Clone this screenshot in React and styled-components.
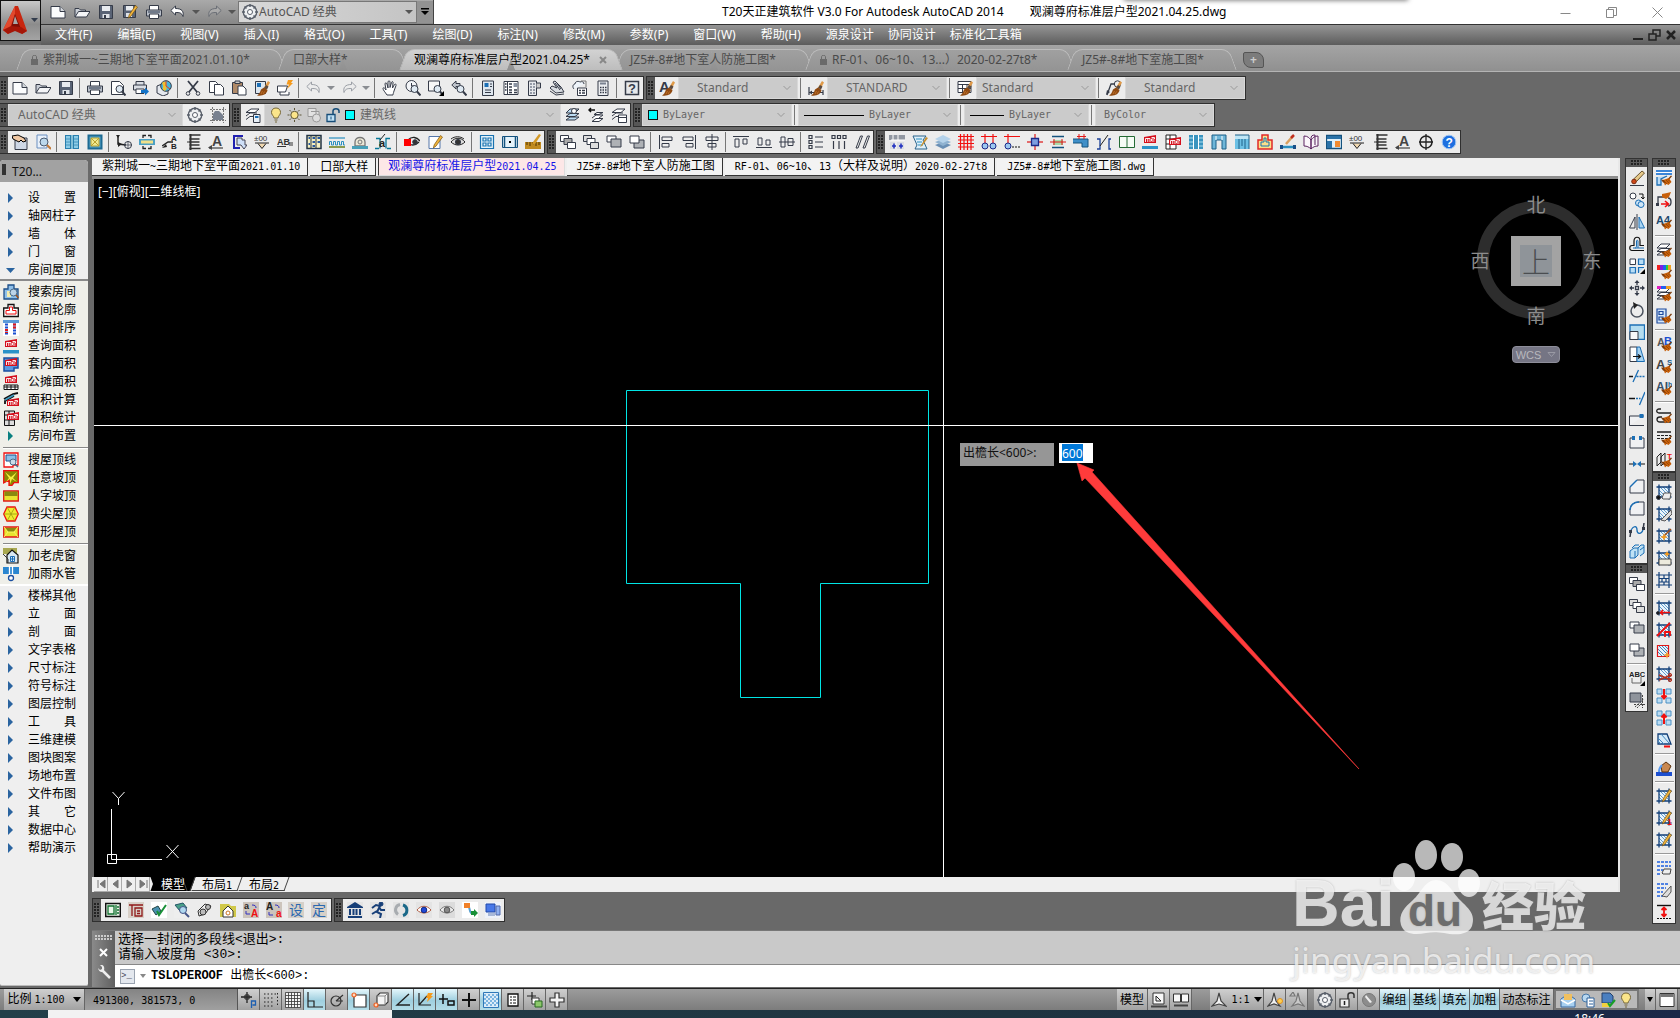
import React from "react";
import styled, { createGlobalStyle, css } from "styled-components";

const UI = '"Noto Sans", "Noto Sans CJK SC", sans-serif';
const INK = "#353b48";
const BLUE = "#1c6fb5";
const NAVY = "#123f78";

const Global = createGlobalStyle`
  *, *::before, *::after { box-sizing: border-box; }
  html, body { margin: 0; height: 100%; overflow: hidden; }
  body { font: 12px/16px ${UI}; background: #696969; color: #000; }
  button, input, select { font: inherit; color: inherit; margin: 0; padding: 0; border: 0; background: none; border-radius: 0; }
  button { display: inline-flex; align-items: center; justify-content: center; }
  a { color: inherit; text-decoration: none; }
`;

/* ---------- drawing shorthands ---------- */
const P = ({ d, f = "none", s = INK, w = 1 }) => <path d={d} fill={f} stroke={s} strokeWidth={w} />;
const F = ({ d, f = INK }) => <path d={d} fill={f} />;
const C = ({ x, y, r, f = "none", s = INK, w = 1 }) => <circle cx={x} cy={y} r={r} fill={f} stroke={s} strokeWidth={w} />;
const Brush = () => (
  <>
    <F d="M14 1l2 1.500-3.500 6.500-2.500-1.500z" f="#e09a48" />
    <F d="M12 5l2.500 1.500-1.500 3-3-1.500z" f="#5a4a40" />
    <F d="M7 9.500l3-2 3.500 2.500c-.5 4-5 6.500-10.500 5.500 2-1 3-3 4-6z" f="#8f4a12" />
    <P d="M8.500 11l-1.500 3M10.500 11.500l-1.500 2.500" s="#c87830" w={0.8} />
  </>
);
const Brush2 = () => (
  <>
    <F d="M15 5.500l1 .8-3.400 4-1.200-1z" f="#7c3b0a" />
    <F d="M7 10l6-2 2.500 4-3 3-2-1-1.500 1.500-1-2.500z" f="#c8600a" />
    <F d="M5 9.500l3 .5 1 3-2-.5z" f="#7c3b0a" />
    <P d="M8 11l3 3M10 10l3 3M12 9.500l2 2" s="#8a3d00" w={0.7} />
  </>
);
const Pencil = () => (
  <>
    <F d="M13.500 1.500l2 1.600-6.500 9-2.600 1.900.8-3.200z" f="#f0b43c" />
    <P d="M13.500 1.500l2 1.600-6.500 9-2.600 1.900.8-3.200z" s="#7a5510" w={0.7} />
  </>
);
const Lens = () => (
  <>
    <C x={9.500} y={9} r={3.500} f="#dfeaf3" />
    <P d="M12 11.500l3.500 4" w={2} />
  </>
);
const M2 = ({ x = 3, y = 2 }) => (
  <g transform={`translate(${x} ${y})`}>
    <F d="M0 2l12-2v8H0z" f="#d40f1c" />
    <P d="M1.500 7V3.500h4.500V7M3.750 3.500V7M7.500 2.500h3v1.500h-3v2h3" s="#fff" w={0.9} />
  </g>
);
const Hatch = ({ c = NAVY }) => (
  <>
    <F d="M3 3h10v10H3z" f="#e9f4fc" />
    <P d="M3 6l7 7M3 9l4 4M4 3l9 9M7 3l6 6M10 3l3 3" s="#3f86bf" w={0.8} />
    <P d="M3 .5v15M13 .5v15M.5 3h15M.5 13h15" s={c} w={1.3} />
  </>
);
const Glyph = ({ c, x = 0, y = 12, s = 12, f = "#222", b = 700 }) => (
  <text x={x} y={y} fontSize={s} fill={f} fontWeight={b} fontFamily='"Liberation Sans", sans-serif'>{c}</text>
);
const Stack = ({ c = "#fff" }) => (
  <>
    <P d="M1 13l4-3h9l-4 3zM1 9.500l4-3h9l-4 3z" f={c} />
    <P d="M1 6l4-4h9l-4 4z" f={c} />
  </>
);
const Overlap = ({ a = "#bbb", b = "#fff" }) => (
  <>
    <P d="M.5 1.500h8v6h-8z" f={b} />
    <P d="M4 4.500h8v6H4z" f={a} />
    <P d="M7.500 8.500h8v6h-8z" f={b} />
  </>
);

const icons = {
  new: <><P d="M1 2.500h9l5 5v6.500H1z" f="#fbfcfd" /><P d="M10 2.500v5h5" f="#d5d9de" /></>,
  open: <><P d="M1 13V4.500h4l1.500 1.500h5v2" f="#c9ced6" /><P d="M1 13l3.500-5.500H16L12.500 13z" f="#f4f5f7" /></>,
  save: <><P d="M1.500 1.500h13v13h-13z" f="#596375" /><F d="M4 2h8v5H4z" f="#e8ebef" /><F d="M4.500 10h7v4h-7z" f="#dfe3e8" /><F d="M6 11h2v3H6z" /></>,
  saveas: <><P d="M1.500 1.500h12v12h-12z" f="#596375" /><F d="M4 2h7v4.500H4z" f="#e8ebef" /><F d="M4 9h6v4H4z" f="#dfe3e8" /><Pencil /></>,
  print: <><P d="M3.500 6V1.500h9V6" f="#fff" /><P d="M.5 6h15v6H.5z" f="#b9bfc9" /><P d="M3.500 10h9v4.500h-9z" f="#fff" /><P d="M2 8h12" s="#596375" w={1.5} /></>,
  preview: <><P d="M1.500 1.500h8l4 4v9h-12z" f="#fff" /><Lens /></>,
  publish: <><P d="M3 5V1.500h8V5M.5 5h13v5H.5z" f="#d9dde3" /><P d="M3 9h8v4.500H3z" f="#fff" /><F d="M8 10h4V7.500l4 4-4 4V13H8z" f="#1473c8" /></>,
  web: <><P d="M1 6l5-2 6 3v7l-5 2-6-3z" f="#e4e8ee" /><C x={10} y={6} r={5.3} f="#46b4dc" /><F d="M7 2c3-1 4 1 3 3s2 3 0 5-4-1-3-3-2-3 0-5z" f="#f0c030" /><P d="M10 1v5l4 3" s="#e04020" /></>,
  cut: <><P d="M3 1l9 11M13 1L4 12" w={1.8} /><C x={3} y={13.500} r={1.8} /><C x={13} y={13.500} r={1.8} /></>,
  copy: <><P d="M1.500 1.500h6l2 2v9h-8z" f="#fff" /><P d="M6.500 4.500h6l3 3v7.500h-9z" f="#fff" /></>,
  paste: <><P d="M1.500 2.500h10v11h-10z" f="#b08a68" /><P d="M4 1h5v2.500H4z" f="#ccc" /><P d="M7 6h5l3 3v6H7z" f="#fff" /></>,
  match: <><P d="M1.500 1.500h10v12h-10z" f="#dce6ef" /><F d="M3 3h4v4H3z" f={BLUE} /><Brush /></>,
  block: <><P d="M.5 6h10l-2 6h-8zM3 12v3h9v-3" f="#fff" /><F d="M11 0l5 0-2 3h2l-6 6 2-4.500H9.500z" f="#f59a1c" /></>,
  undo: <P d="M5.500 2L.8 6.500l4.700 4.500V8.500c4 0 6 0 7.500 4 1-5-1-8-7.500-8z" f="#fff" />,
  undoOff: <P d="M5.500 2L.8 6.500l4.700 4.500V8.500c4 0 6 0 7.500 4 1-5-1-8-7.500-8z" s="#9b9fa6" />,
  redoOff: <P d="M10.500 2l4.700 4.500-4.700 4.500V8.500c-4 0-6 0-7.500 4-1-5 1-8 7.500-8z" s="#9b9fa6" />,
  redoDark: <P d="M10.500 2l4.700 4.500-4.700 4.500V8.500c-4 0-6 0-7.500 4-1-5 1-8 7.500-8z" s="#6b6f76" f="#aaa" />,
  caret: <F d="M0 6h8l-4 4z" f="#555" />,
  caretOff: <F d="M0 6h8l-4 4z" f="#8a8d92" />,
  pan: <P d="M5 15C3 12 1 10 1 8.500s2-.5 3 1.500L3 4c0-1.500 1.500-1.500 2 0l1 4V2c0-1.500 2-1.500 2 0v5.500L9.500 2.500c.5-1.500 2-1 1.500.5L10.500 8l2-3.500c1-1 2 0 1.500 1L12 11c-.5 2-1 3-1 4z" f="#fff" />,
  zoomrt: <><C x={6.500} y={6} r={5.500} f="#f3f5f8" /><P d="M6.500 3v3H10" /><Lens /></>,
  zoomwin: <><P d="M.5 1h11v10H.5z" f="#f7f7f7" /><Lens /><F d="M16 11v5h-5z" f="#000" /></>,
  zoomprev: <><P d="M5 1L.8 5 5 9V6.500h4v-3H5z" f="#c0c5cc" /><Lens /></>,
  props: <><P d="M2.500 1h11v14.500h-11z" f="#dfe7ef" /><F d="M4.500 3h4v4h-4z" f={BLUE} /><P d="M10 4h2M10 6.500h2M5 10h6M5 12.500h6" /></>,
  center: <><P d="M1 1.500h14v13H1z" f="#fff" /><P d="M4.500 1.500v13" /><path d="M6 4h3M6 7h3M6 10h3M2 4h1.500M2 7h1.500M2 10h1.500M6 12.500h3M11 12.500h3M11 10h3" stroke={INK} strokeWidth="1.500" /><F d="M10.500 3h4v4h-4z" f="#8a93a2" /></>,
  palette: <><P d="M2.500 1h8v14.500h-8z" f="#e7e9ec" /><P d="M4 4h2M7 4h2M4 7h2M7 7h2M4 10h2M7 10h2M4 13h2M7 13h2" w={1.5} s="#7b8190" /><P d="M10.500 3h4v5h-4" f="#ccc" /></>,
  sheet: <><P d="M1 8l6 5 8-1-3-5-6-6-2 1 4 6-5-2z" f="#d9dde2" /><P d="M1 11l6 4 8-1M6 3l5 7M8 3l4 6" /></>,
  markup: <><P d="M2 9C0 7 1 4 3 4c0-3 4-3 5-2 2-1 4 0 4 2" f="#eef4fa" /><P d="M9 1h5v6" s="#777" /><P d="M5.500 8h9v7.500h-9z" f="#fff" /><P d="M7 10.500h2M10 10.500h3M7 13h2M10 13h3" w={1.3} /></>,
  calc: <><P d="M3 1h10v14.500H3z" f="#eceef1" /><P d="M5 3.500h6" w={2} s="#7a8290" /><P d="M5 7.500h1.500M7.500 7.500H9M10 7.500h1.500M5 10h1.500M7.500 10H9M10 10h1.500M5 12.500h1.500M7.500 12.500H9M10 12.500h1.500" w={1.3} /></>,
  help: <><P d="M1.500 1.500h13v13h-13z" f="#e6e8eb" w={1.5} /><Glyph c="?" x={4} y={13} s={13} f={INK} /></>,
  textStyle: <><Glyph c="A" x={0} y={12} s={15} f={INK} /><Brush /></>,
  dimStyle: <><P d="M1 7v8M15 10v5M1 12.500h14" w={1.2} /><F d="M1 12.500l3-2v4z" /><Brush /></>,
  tableStyle: <><P d="M1 1.500h13v11H1zM1 4.500h13M1 8.500h13M5.500 4.500v8M10 4.500v8" f="#fff" /><Brush /></>,
  leaderStyle: <><P d="M1 15L5 4h4" w={1.3} /><F d="M0 15l1-5 3 2z" /><C x={11.500} y={4} r={3.200} f="#eee" /><Brush /></>,
  gear: <><C x={8} y={8} r={6.300} w={2.200} s="#5a606b" /><C x={8} y={8} r={5.500} f="#eef0f2" s="#eef0f2" /><P d="M8 0v3M8 13v3M0 8h3M13 8h3M2.500 2.500l2 2M11.500 11.500l2 2M13.500 2.500l-2 2M4.500 11.500l-2 2" w={1.500} s="#5a606b" /><C x={8} y={8} r={2.500} f="#fff" s="#5a606b" /></>,
  frozen: <><path d="M0 2.500h16M0 13.500h16M2.500 0v16M13.500 0v16" stroke="#777" strokeDasharray="2 1" /><F d="M3 13V7l2-3h4l4 4v5z" f="#77808f" /></>,
  layers: <><P d="M1 12.500l4-3h6M1 9l4-3h7M1 5.500L6 2h8l-4 3.500z" f="#fff" /><P d="M8.500 7.500h6.500v8H8.500z" f="#e8f0f8" /><F d="M10 9h3.500v2H10z" f={BLUE} /></>,
  layerUp: <><Stack c="#bcdcf2" /><C x={9} y={4} r={2.500} f="#fff" /></>,
  layerPrev: <><P d="M4 14.500l4-3h7l-4 3zM4 11l4-3h7l-4 3M6 7.500l3-2h6l-4 2z" f="#fff" /><P d="M1 3h6M3 1L1 3l2 2" w={1.500} s="#111" /></>,
  layerState: <><P d="M1 12.500l4-3h6M1 9l4-3h7M1 5.500L6 2h8l-4 3.500z" f="#fff" /><P d="M7.500 8h8v7.500h-8zM7.500 10.500h8" f="#fff" /></>,
  bulb: <><F d="M6 1c3 0 4.500 2 4.500 4.500S8 9 8 11H4c0-2-2.500-3-2.500-5.500S3 1 6 1z" f="#fbe58a" /><P d="M6 1c3 0 4.500 2 4.500 4.500S8 9 8 11H4c0-2-2.500-3-2.500-5.500S3 1 6 1zM4.500 13h3M5 15h2" s="#77683a" /></>,
  sun: <><C x={7.500} y={8} r={3.700} f="#fbe58a" s="#5c5436" /><P d="M7.500 1v2M7.500 13v2M.5 8h2M12.500 8h2M2.500 3L4 4.500M11 11.500l1.500 1.500M12.500 3L11 4.500M4 11.500L2.500 13" s="#5c5436" /></>,
  vpfreeze: <><P d="M1 1.500h8v8H1zM4 4.500h8v5" s="#999" f="#e2e2e2" /><C x={9.500} y={11} r={4} s="#999" f="#ddd" /></>,
  unlock: <><P d="M1 7.500h8v7H1z" f="#bfe0f5" s="#154c78" w={1.300} /><P d="M7 7V4c0-3 6-3 6 0v2" s="#154c78" w={1.500} /><P d="M5 9.500v3" s="#154c78" /></>,
  hand: <><P d="M3 4h12v11.500H3z" f="#cfd8e6" /><F d="M0 2l6-1 6 3 2 3-3 1-2-2-2 2-6-3z" f="#f2c9a4" /><P d="M0 2l6-1 6 3 2 3-3 1-2-2-2 2-6-3z" s="#000" /></>,
  find: <><P d="M2 1h10v13H2z" f="#e8f0fa" s="#6b8fc0" /><C x={9} y={8} r={4} f="#bcd8ec" s="#4a5a70" /><P d="M12 11l4 4" s="#c27a3a" w={2} /></>,
  wallWin: <><F d="M1 1h14v14H1z" f="#2a7fae" /><F d="M2 2h4v12H2zM10 2h4v12h-4z" f="#8ccbe6" /><P d="M8 1v14" s="#dff" w={1} /><P d="M1 5h5M1 8h5M1 11h5M10 5h5M10 8h5M10 11h5" s="#2a7fae" w={0.700} /></>,
  column: <><P d="M1.500 1.500h13v13h-13z" f="#5aa9cc" s="#1d6a92" w={2} /><P d="M4 4h8v8H4zM4 4l8 8M12 4l-8 8" s="#b8a030" f="#f0ea90" /></>,
  axis: <><P d="M2 1v9l8 1" w={1.500} s="#222" /><F d="M0 1h4l-2 3zM2 8l4 2-4 3z" f="#222" /><C x={12} y={11} r={3.500} /><P d="M8 11h8M12 7v8" w={0.700} /></>,
  section: <><F d="M0 5h16v6H0z" f="#4ba0c4" /><F d="M2 6.500h12v3H2z" f="#f0e08a" /><P d="M4 4V1.500h3M9 1.500h3V4M4 12v2.500h3M9 14.500h3V12" s="#222" w={1.300} /></>,
  leaderAB: <><P d="M0 12l6-4 5 0" s="#222" w={1.300} /><F d="M0 14l4-4 1 3z" f="#222" /><Glyph c="A" x={9} y={7} s={8} /><Glyph c="B" x={9} y={15} s={8} /></>,
  dimE: <><P d="M4.500 1h11M4.500 5h10M4.500 8h10M4.500 11h10M4.500 14.500h11" s="#333" w={1.300} /><P d="M5.500 0v16" s="#333" w={2} /><P d="M2 8h3" s="#333" /></>,
  arrowA: <><Glyph c="A" x={4} y={12} s={14} f="#444" /><P d="M1 14h14" s="#444" w={1.200} /><F d="M4 11v5l-4-2.500z" f="#444" /></>,
  roomE: <><P d="M12 2H3v12h6" s="#2020b0" w={2} /><P d="M6 4h5v2h3v5h2l-3 4-3-4H6z" f="#cfe0f8" s="#445" /></>,
  elev: <><Glyph c="±00" x={0} y={7} s={8} f="#333" b={400} /><P d="M1 9h14M4 9.500l4 5 4-5" s="#222" f="#f0d8b0" /></>,
  ab: <><Glyph c="AB" x={0} y={11} s={9} f="#333" /><P d="M0 12.500h9M12 9h4M12 11h4" s="#333" /></>,
  table: <><P d="M1 1.500h14v13H1z" f="#f4efc0" s="#234" w={1.500} /><P d="M5 1.500v13M10 1.500v13" s="#234" /><P d="M2.500 4h1.500M6.500 4H9M11.500 4H14M6.500 8H9M11.500 8H14M2.500 10h1.500M6.500 12H9" s="#2858a0" w={2} /></>,
  wave: <><P d="M0 4h16" s="#2a8fc0" w={1.200} /><P d="M.5 11V7.500h2V11h2V7.500h2V11h2V7.500h2V11h2V7.500h2V11H16" s="#2a8fc0" /><P d="M0 13h16" s="#8a9a50" w={2} /></>,
  arch: <><P d="M3 12V8c0-6 10-6 10 0v4z" f="#ece9d8" s="#777" w={1.300} /><C x={8} y={8} r={2} s="#777" /><F d="M0 12h16v3H0z" f="#48a0b8" /></>,
  pavil: <><P d="M1 4.500h4v10M15 4.500h-4v10M0 14.500h4M12 14.500h4" s="#087898" w={1.300} /><P d="M5 6l5-6" s="#222" /><Glyph c="a" x={4} y={13} s={11} /></>,
  redEye: <><P d="M4 6c4-4 9-3 12 1M5 10c4 2 7 1 10-2" s="#222" w={1.300} /><C x={11} y={8} r={2.300} f="#333" /><F d="M0 5h7v7H0z" f="#f00" /></>,
  edit: <><P d="M2 2.500h11v12H2z" f="#fff" s="#5577aa" /><Pencil /></>,
  eye: <><P d="M1 8c4-5 10-5 14 0-4 4-10 4-14 0z" f="#ddd" s="#222" /><C x={8} y={8} r={2.600} f="#333" /><P d="M1 5c4-3 9-3 13 0" s="#222" /></>,
  grid4: <P d="M1.500 1.500h13v13h-13zM4 4h3v3H4zM9 4h3v3H9zM4 9h3v3H4zM9 9h3v3H9z" s="#1a72b0" w={1.200} f="#e4f2fa" />,
  door: <><P d="M.5 2.500h15v11H.5z" f="#e4f2fa" s="#14527e" /><P d="M2.500 2v12M13.500 2v12" s="#14527e" w={1.500} /><F d="M7 7h2v2H7z" f="#000" /></>,
  ruler: <><F d="M0 8h16v7H0z" f="#c08a20" /><P d="M2 8v3M5 8v4M8 8v3M11 8v4M14 8v3" s="#4a3000" /><F d="M14 0l2 1-6 9-3 1 1-3z" f="#d49a28" /></>,
  ov1: <Overlap a="#aaa" b="#fff" />, ov2: <Overlap a="#fff" b="#ddd" />,
  ov3: <><P d="M1 2h9v6H1z" f="#fff" /><P d="M5 5h10v8H5z" f="#aeb1b5" /></>,
  ov4: <><P d="M5 6h10v8H5z" f="#aeb1b5" /><P d="M1 2h9v7H1z" f="#fff" /></>,
  alL: <P d="M1.500 1v14M4 3h10v3.500H4zM4 9.500h7v3.500H4z" f="#eee" />,
  alR: <P d="M14.500 1v14M2 3h10v3.500H2zM5 9.500h7v3.500H5z" f="#eee" />,
  alC: <P d="M8 0v16M2 3h12v3.500H2zM4 9.500h8v3.500H4z" f="#eee" />,
  alT: <P d="M0 2.500h16M2 5h4v8H2zM10 5h4v5h-4z" f="#eee" />,
  alB: <P d="M0 13.500h16M2 4h4v7H2zM10 6h4v5h-4z" f="#eee" />,
  alM: <P d="M0 8h16M2 3h4v10H2zM9 4.500h5v7H9z" f="#eee" />,
  distV: <P d="M1 1.500h3v3H1zM1 6.500h3v3H1zM1 11.500h3v3H1zM7 3h8M7 8h8M7 13h8" w={1.200} />,
  distH: <P d="M1 1.500h3v3H1zM6.500 1.500h3v3h-3zM12 1.500h3v3h-3zM2.500 7v8M8 7v8M13.500 7v8" w={1.200} />,
  slope: <P d="M2 14l4.500-12h2L4 14zM9 14l4.500-12h2L11 14z" />,
  struct: <><F d="M0 1h16v5H0z" f="#9298a2" /><F d="M1 8h5v7H1zM8 8h7v7H8z" f="#d9dce2" /><P d="M2 6h14M4 1v5M9 1v5" s="#fff" /><P d="M5 9.500v5M12 9.500v5M3 12h4M10 12h4" s="#2030c0" w={1.500} /></>,
  doc: <><P d="M1 2h13l-3 4 4 9H3l2-4z" f="#dff0fa" s="#2a648c" /><P d="M4 5h6M5 8h5M6 11h5" s="#2a8fc0" /><F d="M14 3l2 1-6 8-2 1z" f="#c89030" /></>,
  diam: <><F d="M0 11l8-3 8 3-8 4z" f="#6a8fb4" /><F d="M0 8l8-3 8 3-8 4z" f="#8fb2d0" /><F d="M0 5l8-4 8 4-8 4z" f="#b4d2ea" /></>,
  redGrid: <P d="M0 2.500h16M0 6h16M0 9.500h16M0 13h16M2.500 0v16M6 0v16M9.500 0v16M13 0v16" s="#f01010" w={1.200} />,
  ax2: <><P d="M0 2.500h16M4 0v9M12 0v9" s="#f01010" w={1.200} /><C x={4} y={12} r={3} f="#9cc8f0" s="#1c2a88" /><C x={12} y={12} r={3} f="#9cc8f0" s="#1c2a88" /></>,
  ax1: <><P d="M0 2.500h16M4 0v9" s="#f01010" w={1.200} /><C x={4} y={12} r={3} f="#9cc8f0" s="#1c2a88" /><P d="M8 13h2M11 13h2M14 13h2" s="#111" /></>,
  pile: <><P d="M8 0v16M0 8h16" s="#e04040" w={1.500} /><P d="M4.500 4.500h7v7h-7z" f="#7d9ee0" s="#1c2a88" w={1.300} /></>,
  beam: <><F d="M3 6h10v5H3z" f="#a8dca8" /><P d="M2 2.500h12M2 13.500h12" s="#14527e" w={1.300} /><P d="M0 8h16M4 5v6M12 5v6" s="#e01818" /></>,
  slab: <><F d="M0 5h15v8H9v-4H0z" f="#3f8fc8" /><P d="M0 5h15v8H9V9H0" s="#14527e" /><P d="M6 0v5M11 0v5M4 2.500h9" s="#e01818" /></>,
  swing: <><P d="M1 5h3v10H1M15 5h-2v10h2" s="#1a3f98" w={1.300} /><P d="M4 12L12 1" s="#222" /></>,
  win: <P d="M.5 2.500h15v11H.5zM8 2.500v11" s="#246a34" f="#f6fcf6" />,
  m2: <><M2 x={2} y={1} /><F d="M0 12h16v3H0z" f="#2a92c8" /></>,
  m2t: <><P d="M1 1h10v14H1zM1 5h10M1 10h10M5 1v14" s="#222" f="#fff" /><M2 x={4} y={3} /></>,
  pillar: <><F d="M1 1h14v14H1z" f="#3a94bf" /><P d="M5.500 1v14M10.500 1v14" s="#fff" /><P d="M1 4h4M11 4h4M1 8h4M11 8h4M1 12h4M11 12h4" s="#a8dcee" /></>,
  gate: <><F d="M1 1h14v14h-4V6H5v9H1z" f="#6fb6d8" /><P d="M1 1h14v14h-4V6H5v9H1z" s="#1f6088" /><P d="M5 2v4M11 2v4" s="#fff" /></>,
  gate2: <><F d="M1 1h14v14H1z" f="#6cc0e4" /><F d="M1 1h14v4H1z" f="#bfe6f6" /><P d="M5 5v10M8 5v7M11 5v10M1 1h14v14" s="#1f6088" /></>,
  roof: <><P d="M5 1h6v5h4v9H1V6h4z" f="#fbe08a" s="#e02828" w={1.500} /><P d="M7 4h2v4h3v4H4V8h3z" s="#1a72b0" /></>,
  joint: <><P d="M2 13h12" s="#2a8fc0" w={2.500} /><F d="M0 11h3v4H0zM13 11h3v4h-3z" f="#1a4f88" /><P d="M6 10l7-8" s="#d8a060" w={2.500} /><P d="M11 4l3-3" s="#c03020" w={2.500} /></>,
  book: <P d="M1 2c4 0 5 2 7 4v9c-2-2-4-3-7-3zM15 2c-4 0-5 2-7 4v9c2-2 4-3 7-3zM8 5c0-3 1-4 4-4v10" s="#5a2360" f="#fbf6fb" />,
  plan: <><P d="M.5 1.500h15v13H.5z" f="#dff0fa" s="#14527e" w={1.300} /><F d="M1 2h14v3H1zM1 7h5v7H1z" f="#2a72a8" /><F d="M9 7h5v6H9z" f="#f08a30" /></>,
  north: <><C x={8} y={8} r={6} s="#222" w={1.500} /><P d="M8 0v16M1 8h14" s="#222" w={1.300} /></>,
  qmark: <><C x={8} y={8} r={6.800} f="#1d6fe0" s="#9cc4f4" /><Glyph c="?" x={4.500} y={12.500} s={12} f="#fff" /></>,
  erase: <><P d="M1 15.500h14" /><F d="M13 1l2.500 2-8 8.500-2.800-2.500z" f="#e6c98a" /><P d="M13 1l2.500 2-8 8.500-2.800-2.500z" s="#6b5530" /><C x={5} y={11.500} r={2.300} f="#d04818" s="#7a2a10" /></>,
  copyObj: <><C x={4} y={4} r={3} f="#fff" /><P d="M10 2h4v5M12 5l2 2 1.500-2" s="#111" /><C x={9.500} y={11} r={3} f="#cfe6f8" s={BLUE} /><C x={12} y={12.500} r={3} f="#cfe6f8" s={BLUE} /></>,
  mirror: <><P d="M6 3v11H.5zM8 0v16" /><P d="M10 3v11h5.500z" f="#a8d4f2" s={BLUE} /></>,
  offset: <><P d="M15 14.500H3c-3 0-3-5 0-5h2V5c0-5 6-5 6 0v4.500h4" w={1.200} s="#111" /><P d="M15 12H4M6 12c1 0 1.500-1 1.500-2V5c0-1 1.500-1 1.500 0v7" s={BLUE} /></>,
  array: <><P d="M1 1h5.500v5.500H1z" f="#fff" /><P d="M9.500 1H15v5.500H9.500zM1 9.500h5.500V15H1zM9.500 15V9.500H15" f="#b8ddf5" s={BLUE} w={1.200} /><F d="M16 11v5h-5z" f="#000" /></>,
  move: <><F d="M8 0l2.500 3h-5zM8 16l2.500-3h-5zM0 8l3-2.500v5zM16 8l-3-2.500v5z" /><P d="M8 2v3M8 11v3M2 8h3M11 8h3M6.500 6.500h3v3h-3z" w={1.300} /></>,
  rotate: <><C x={8} y={9} r={6} s="#4b525e" w={1.500} /><F d="M4 0l5 3-4 4z" f="#222" /></>,
  scale: <><P d="M1 1h14.500v14.500H1z" f="#b4dcf0" s={BLUE} w={1.300} /><P d="M1 7.500h8v8H1z" f="#f7f8fa" /></>,
  stretch: <><P d="M1 1h7v14.500H1z" f="#fff" /><P d="M8 1h3l4.500 14.500H8z" f="#a8d4f2" s={BLUE} /><P d="M4 10.500h7M9 8.500l2.500 2L9 12.500" s="#111" w={1.200} /></>,
  trim: <><P d="M0 8.500h4" s="#111" w={1.500} /><P d="M4 14L9.500 2M7.500 8.500h2M10.500 8.500h2M13.500 8.500h2" s={BLUE} w={1.300} /></>,
  extend: <><P d="M0 8.500h6" s="#111" w={1.500} /><P d="M7 8.500h2M10 8.500h1.500M10.500 15L16 2" s={BLUE} w={1.300} /></>,
  breakPt: <><P d="M.5 13.500V4H15M.5 13.500H15" f="#f0f1f3" /><F d="M10.500 2h4v4h-4z" f={BLUE} /></>,
  breakObj: <><P d="M4 4H1v10h14V4h-3" f="#f0f1f3" /><F d="M3 2h3v4H3zM10 2h3v4h-3z" f={BLUE} /></>,
  join: <><P d="M0 8h5M11 8h5" s="#111" /><F d="M4 5l4 3-4 3zM12 5L8 8l4 3z" f={BLUE} /></>,
  chamfer: <><P d="M1 15V9l7-7h7v13z" f="#f0f1f3" /><P d="M1 9l7-7" s={BLUE} w={1.500} /></>,
  fillet: <><P d="M1 15v-5C1 5 5 2 10 2h5v13z" f="#f0f1f3" /><P d="M1 10C1 5 5 2 10 2" s={BLUE} w={1.500} /></>,
  blend: <><P d="M1 15l1-7M15 1l-1 7" w={1.500} /><P d="M2 8c3-5 6-4 6 0s4 5 6 0" s={BLUE} w={1.300} /><F d="M0 8h3v3H0zM13 5h3v3h-3z" /></>,
  explode: <P d="M1 7l4-3h4v7l-3 3H1zM9 4l3-3h3v8l-4 3M3 4l3-3h4M6 7v7M11 6l4-3" f="#bfe2f5" s={BLUE} />,
  abcTop: <><P d="M3 8v5h9V7" f="#eee" s="#666" /><Glyph c="ABC" x={0} y={7} s={7.500} /><F d="M16 11v5h-5z" f="#000" /></>,
  hatchBack: <><path d="M5 12.500h11M13.500 3v13M8 16l6-6M6 15l9-8" stroke="#444" strokeDasharray="2 1" fill="none" /><P d="M1 1h11v9H1z" f="#8f949c" /></>,
  wallB: <><F d="M0 0h16v5H0z" f="#3c86d8" /><P d="M0 2.500h16" s="#fff" /><P d="M1 7v8h4v-6l6-3" s={BLUE} w={1.300} f="#bcdcf6" /><Brush2 /></>,
  pathB: <><P d="M2 12V5h6M12 6c4 0 4 8 0 8" w={1.300} /><F d="M0 11h3v3H0z" /><P d="M5 12h7M9 9l3.500 3L9 15" s="#f01010" w={1.600} /><F d="M6 2l5-1 4-1-2 5-3 2-4-2z" f="#c8600a" /></>,
  textB: <><Glyph c="A4" x={0} y={10} s={11} f="#1d4a6e" /><Brush2 /></>,
  layerB: <><Stack /><Brush2 /></>,
  rainB: <><F d="M1 1h3v5H1z" f="#f02020" /><F d="M4 1h3v5H4z" f="#8020e0" /><F d="M7 1h3v5H7z" f="#2060f0" /><F d="M10 1h2v5h-2z" f="#20d040" /><F d="M12 1h3v5h-3z" f="#f0a020" /><Brush2 /></>,
  rainLB: <><Stack /><F d="M1 0h4v3H1z" f="#e020c0" /><F d="M5 0h5v3H5z" f="#2060f0" /><F d="M10 0h5v3h-5z" f="#f0a020" /><Brush2 /></>,
  propB: <><P d="M1 1h9v14H1zM3 3.500h4v3H3zM3 9h4v3H3z" f="#d4e6fa" s="#1d4a9e" w={1.200} /><Brush2 /></>,
  abB: <><Glyph c="A" x={1} y={10} s={11} f="#555" /><Glyph c="B" x={8} y={9} s={11} f="#1a4fd0" /><Brush2 /></>,
  asB: <><Glyph c="A" x={0} y={11} s={13} f="#444" /><Glyph c="S" x={11} y={7} s={8} f="#1a6090" /><Brush2 /></>,
  aiB: <><Glyph c="AI" x={0} y={11} s={12} f="#35506a" /><Glyph c="h" x={12} y={7} s={7} f="#1a6090" /><Brush2 /></>,
  lineB: <><P d="M15 5H3C0 5 0 1 3 1h2M15 14H4c-4 0-4-5 0-5h2" s="#222" w={1.300} /><Brush2 /></>,
  dashB: <><P d="M1 2h14" w={1.500} s="#222" /><path d="M1 5.500h14M1 8.500h14" stroke="#222" strokeDasharray="3 1" /><Brush2 /></>,
  tB: <><P d="M1 14V5l4-4v9zM5 14V5l4-4v9z" s="#222" /><Glyph c="T" x={11} y={7} s={8} f="#f01010" /><Brush2 /></>,
  hErase: <><Hatch /><P d="M6 14l2-5h7l-1 6H7z" f="#eee" s="#555" /><C x={2.500} y={13.500} r={2} f="#111" /></>,
  hKnife: <><Hatch /><P d="M5 14l10-10 1 4-7 7z" f="#ddd" s="#555" /></>,
  hSpark: <><Hatch /><P d="M8 8l7-7" s="#a05018" w={1.500} /><F d="M8 5l1 3 3 1-3 1-1 3-1-3-3-1 3-1z" f="#f59a1c" /></>,
  hCard: <><Hatch /><P d="M3 9h12v6H3z" f="#eceadd" s="#444" /><F d="M11 1l1 2 2 1-2 1-1 2-1-2-2-1 2-1z" f="#f59a1c" /></>,
  hBrick: <><P d="M3 0v16M13 0v16M0 3h16M0 13h16M3 6.500h10M3 10h10M8 3v3.500M6 6.500V10M10 6.500V10M8 10v3" s={NAVY} w={1.200} f="none" /></>,
  hMove: <><Hatch /><P d="M5 12.500h9M7 10l-2.500 2.500L7 15" s="#f01010" w={1.600} /><C x={2} y={13} r={1.500} f="#111" /></>,
  hCut: <><Hatch /><P d="M1 14L14 1M9 15v-5h5v4" s="#f01010" w={1.800} /></>,
  hRed: <><F d="M2 2h10v10H2z" f="#e9f4fc" /><P d="M2 5l7 7M2 8l4 4M3 2l9 9M6 2l6 6M9 2l3 3" s="#3f86bf" /><P d="M1.500 1.500h11v11h-11z" s="#e01818" w={1.200} /><F d="M11 7l1 3 3 1-3 1-1 3-1-3-3-1 3-1z" f="#f5a030" /></>,
  hSciss: <><Hatch /><P d="M3 14l12-5M3 9l12 5" s="#b03020" w={1.500} /><C x={14} y={14} r={1.600} s="#b03020" /><C x={14} y={9} r={1.600} s="#b03020" /></>,
  hDown: <><P d="M1 1h5v5H1zM10 1h5v5h-5zM1 10h5v5H1zM10 10h5v5h-5z" f="#bcdcf2" s="#4a90c4" /><P d="M8 1v9M5.500 7.500L8 10.500l2.500-3" s="#f01010" w={2} /></>,
  hUp: <><P d="M1 1h5v5H1zM10 1h5v5h-5zM1 10h5v5H1zM10 10h5v5h-5z" f="#bcdcf2" s="#4a90c4" /><P d="M8 14V5M5.500 7.500L8 4.500l2.500 3" s="#f01010" w={2} /></>,
  hPoly: <><P d="M2 2h9l4 10H2z" f="#d6eaf8" s={NAVY} w={1.300} /><P d="M2 6l6 6M5 2l8 9M2 9l3 3" s="#3f86bf" /><P d="M8 14.500h6" s="#f01010" w={2} /></>,
  bucket: <><F d="M0 12h16v4H0z" f="#1d4fd0" /><P d="M5 6l5-4 5 4-3 6H6z" f="#c98850" s="#5a3310" /><P d="M6 5c-2 2-3 3-3 7" s="#5a9cf0" w={2} /></>,
  hPen: <><Hatch /><Pencil /></>,
  hPen1: <><Hatch /><Pencil /><Glyph c="1" x={11} y={15} s={9} f="#f01010" /></>,
  dashE: <><path d="M1 2h14M1 6h14M1 10h6M1 14h4" stroke="#1d5fe0" strokeWidth="1.400" strokeDasharray="3 1" /><P d="M6 13l2-4h7l-1 5H7z" f="#eee" s="#444" /></>,
  dashK: <><path d="M1 2h12M1 6h9M1 10h6M1 14h6" stroke="#1d5fe0" strokeWidth="1.400" strokeDasharray="3 1" /><P d="M6 14l9-10v6l-4 5z" f="#ddd" s="#555" /></>,
  spread: <><P d="M1 1.500h14" s="#111" w={1.400} /><path d="M1 14.500h14" stroke="#111" strokeDasharray="2 1" /><P d="M8 4v8M5.500 6L8 3.500 10.500 6M5.500 10L8 12.500l2.500-2.500" s="#f01010" w={1.800} /></>,
  sRoom: <><P d="M5 1h6v4h4v10H1V5h4z" f="#8fc0e8" s="#1d4f88" w={1.300} /><F d="M4 7h4v6H4z" f="#f2ecb0" /><C x={10.500} y={8.500} r={3.500} f="#bcd4e8" s="#4a6a88" /><P d="M13 11l2.500 3" s="#a05018" w={1.500} /></>,
  sOutline: <><P d="M5 2.500h6V6h4.300v8.500H.7V6H5z" f="#fff" s="#111" w={1.300} /><P d="M6.500 5h3v3.500H13V12H3V8.500h3.500z" s="#f01010" /></>,
  sSort: <><F d="M0 0h16v16H0z" f="#fff" /><F d="M0 0h16v3H0z" f="#5a9ad8" /><path d="M3.500 3.500v12M11.500 3.500v12" stroke="#1a4fd0" strokeWidth="3" strokeDasharray="2 1" /><path d="M3.500 9v4M11.500 3.500v5" stroke="#e01818" strokeWidth="3" strokeDasharray="2 1" /></>,
  sM2a: <><M2 x={2} y={1} /><F d="M0 12h16v3.500H0z" f="#2a92c8" /></>,
  sM2b: <><P d="M1 2h14v10h-4v3H1z" f="#5a98e0" s="#1a4fa0" w={1.500} /><M2 x={2} y={2} /></>,
  sM2c: <><P d="M1 11h14v4.500H1zM1 13h14M4 11v4M8 11v4M12 11v4" s="#111" f="#fff" /><M2 x={2} y={1} /></>,
  sM2d: <><P d="M1 7l9-5 5-1M2 12V9l9-5" s="#111" w={1.800} /><P d="M2 8l9-5" s="#3a9ac0" w={1.500} /><M2 x={4} y={6} /></>,
  sM2e: <><P d="M1.500 1h10v14.500h-10zM1.500 5h10M1.500 10h10M6 1v14" s="#111" f="#ddd" /><M2 x={4} y={2} /></>,
  sRoofLine: <><P d="M1 1h14v12h-5v2H1z" f="#fff" s="#f01010" w={1.300} /><P d="M3 3h10v6H3z" f="#8cc0e8" s="#1d4f88" /><C x={10} y={10} r={3} f="#c8dce8" s="#4a6a88" /><P d="M12 12l3 3" s="#4a6a88" w={1.500} /></>,
  sAny: <><P d="M.7.7h14.600v12H11l-2 2.600H6V10L.7 13z" f="#8a8a00" s="#f01010" w={1.300} /><F d="M2 2l6 5 6-5-4 6 4 4-5-3-2 5V9l-4 3 3-4z" f="#f4f040" /></>,
  sGable: <><P d="M.7 3h14.600v10H.7z" f="#e8e430" s="#e01818" w={1.300} /><F d="M1.500 3.500h13V8h-13z" f="#8a8a10" /></>,
  sPyr: <><P d="M4 1h8l3.300 7-3.300 7H4L.7 8z" f="#f0ec30" s="#f01010" w={1.300} /><P d="M4 1l8 14M12 1L4 15M1 8h14" s="#9a9a10" w={0.800} /></>,
  sRect: <><P d="M.7 3h14.600v10H.7z" f="#e8e430" s="#e01818" w={1.300} /><F d="M2 4h12L11 8H5z" f="#8a8a10" /><P d="M1 3l4 5-4 5M15 3l-4 5 4 5M5 8h6" s="#f8f460" /></>,
  sDormer: <><F d="M0 0h14v6H0z" f="#a8a850" /><P d="M4 15V7l5-5 6 5v8z" f="#d8e8f4" s="#111" w={1.200} /><P d="M7.500 8.500h4v5h-4zM9.500 8.500v5M7.500 11h4" s="#1d6fb8" /><P d="M0 6l5 5v4" s="#333" /></>,
  sPipe: <><F d="M0 1h16v7H0z" f="#2a86d0" /><P d="M6.500 0v10M9.500 0v10" s="#fff" w={1.300} /><C x={8} y={12} r={2.500} f="#fff" s="#1a4fa0" w={1.300} /></>,
  bDoor: <><P d="M.7 1.500h14.600v13H.7z" f="#e8f6e8" s="#111" w={1.500} /><P d="M3 4h6v8H3zM11 3v10M12 5h2M12 8h2M12 11h2" s="#127030" w={1.300} /></>,
  bTable: <><F d="M0 0h16v16H0z" f="#d8d0c8" /><P d="M1 3h14M4 3v11M7 6h7v8H7zM9 9h3M9 11.500h3" s="#901818" w={1.300} /></>,
  bCheck: <><F d="M0 0h16v16H0z" f="#fff" /><P d="M1 7l6-3 3 5-5 4z" f="#4a90b0" s="#244" /><P d="M6 9l2 4 7-10" s="#189038" w={2} /></>,
  bMag: <><F d="M0 0h16v16H0z" f="#eee" /><P d="M1 3l8-2 4 5-7 3z" f="#48a088" s="#256" /><C x={9} y={8} r={3.500} f="#b0d8f0" s="#458" /><P d="M11 11l4 4" w={2} s="#458" /></>,
  bGear: <><P d="M1 9l7-7 6 2-6 8-6 2z" f="#eee" s="#333" /><C x={6} y={10} r={3} f="#bbb" s="#333" /><C x={11} y={5} r={2.500} f="#bbb" s="#333" /></>,
  bHouse: <><F d="M0 2h9l2 2h5v11H0z" f="#d0c84a" /><P d="M3 9l5-5 5 5v6H3z" f="#fff" s="#333" /><C x={8} y={11} r={2} s="#c87020" /></>,
  bAa: <><F d="M0 0h16v16H0z" f="#ccc4bc" /><Glyph c="a" x={1} y={7} s={9} /><Glyph c="A" x={8} y={15} s={10} f="#f01010" /><P d="M3 9v3h4M9 3c3 0 4 1 4 3" s="#3030c0" /></>,
  bAa2: <><F d="M0 0h16v16H0z" f="#ccc4bc" /><Glyph c="A" x={0} y={8} s={10} /><Glyph c="a" x={10} y={15} s={10} f="#f01010" /><P d="M3 10v3h4M9 3c3 0 4 1 4 3" s="#3030c0" /></>,
  bBank: <><F d="M0 0h16v16H0z" f="#e4e4e4" /><F d="M8 0l8 5v1H0V5zM1 14h14v2H1z" f="#173f78" /><P d="M3 7v6M6.500 7v6M9.500 7v6M13 7v6" s="#173f78" w={2} /></>,
  bRun: <><F d="M0 0h16v16H0z" f="#e4e4e4" /><C x={11} y={2} r={2} f="#173f78" s="#173f78" /><P d="M2 6l4-3 4 1-3 6 4 2-1 4M7 9l-5 3M9 5l2 3h4" s="#173f78" w={2} /></>,
  bRing: <><F d="M0 0h16v16H0z" f="#e4e4e4" /><P d="M7 2.500a5.500 5.500 0 0 0-2 10" w={3} s="#a8acb0" /><P d="M10 3a5.500 5.500 0 0 1 0 10.500" w={3} s="#1a6888" /></>,
  bEye: <><F d="M0 0h16v16H0z" f="#e4e4e4" /><P d="M1 8c4-5 10-5 14 0-4 4-10 4-14 0z" f="#fff" s="#b06048" /><C x={8} y={8} r={2.800} f="#2048d8" s="#102880" /></>,
  bEye2: <><F d="M0 0h16v16H0z" f="#dcdcdc" /><P d="M1 8c4-5 10-5 14 0-4 4-10 4-14 0z" f="#eee" s="#777" /><C x={8} y={8} r={2.800} f="#888" s="#555" /></>,
  bNode: <><F d="M0 0h16v16H0z" f="#fff" /><P d="M4 3c6 0 1 9 8 9" s="#58a0d0" w={2} /><F d="M2 1h6v5H2z" f="#f08028" /><F d="M9 9h3V7l4 4-4 4v-2H9z" f="#189038" /></>,
  bPc: <><F d="M0 0h16v16H0z" f="#eef2fa" /><P d="M1 2h9v8H1z" f="#4878e8" s="#2048a8" /><P d="M11 4h4v9h-4z" f="#90b0f0" s="#5068a8" /><F d="M3 11h7v3H3z" f="#a8b8d8" /></>,
  stInfer: <><P d="M6 0v11M0 5h11" s="#222" w={1.300} /><P d="M4 3h4v4H4z" s="#222" /><P d="M10.500 16V9h4v4h-3" s="#1d5fb0" w={1.300} /></>,
  stSnap: <path d="M1 2h14M1 6h10M1 10h10M1 14h10M14.500 1v14" stroke="#222" strokeDasharray="1.500 2" />,
  stGrid: <P d="M.5.5h15v15H.5zM3.500.5v15M6.500.5v15M9.500.5v15M12.500.5v15M.5 3.500h15M.5 6.500h15M.5 9.500h15M.5 12.500h15" s="#333" w={0.800} f="#f4f4f4" />,
  stOrtho: <P d="M1 0v15h15M1 9h6v6" s="#222" w={1.200} />,
  stPolar: <><C x={7} y={9} r={5} s="#333" w={1.200} /><P d="M7 9l7-6M7 9h7" s="#333" w={1.200} /></>,
  stOsnap: <><P d="M3 3h12v12H3z" f="#fff" s="#333" w={1.200} /><C x={3} y={3} r={2} s="#f06020" f="#ffd8c0" w={1.200} /></>,
  st3d: <><P d="M4 4l3-3h8v9l-3 3H4z" f="#f4f4f4" s="#333" w={1.100} /><P d="M12 4l3-3M4 4h8v9" s="#888" /><C x={3} y={13} r={2} s="#f06020" f="#ffd8c0" w={1.200} /></>,
  stTrack: <P d="M14 2L2 13h13" s="#222" w={1.400} />,
  stDucs: <><P d="M2 1v12h12M2 13l8-9" s="#222" w={1.200} /><F d="M11 1h5l-2 3h2l-6 6 1-4h-2z" f="#f59a1c" /></>,
  stDyn: <P d="M4 2v10M0 7h9M9 9h6v4H9z" s="#111" w={1.500} />,
  stLwt: <P d="M8 1v14M1 8h14" s="#111" w={2} />,
  stTpy: <><P d="M.5.5h15v15H.5z" f="#dcecf8" s="#2f78b8" /><path d="M1 3h14M1 7h14M1 11h14" stroke="#7ab4e0" strokeWidth="2" strokeDasharray="2 2" /><path d="M3 5h12M3 9h12M3 13h12" stroke="#7ab4e0" strokeWidth="2" strokeDasharray="2 2" /></>,
  stQp: <><P d="M3 2h10v12H3z" f="#fff" s="#111" w={1.300} /><P d="M5 5h2M8 5h3M5 8h2M8 8h3M5 11h2M8 11h3" s="#111" /></>,
  stSc: <><P d="M5 0v8M0 4h9" s="#222" w={1.200} /><P d="M5 6h7v6H5z" f="#fff" s="#333" /><P d="M8 9h7v6H8z" f="#8cc86a" s="#286820" /></>,
  stAm: <P d="M6 1h4v5h5v4h-5v5H6v-5H1V6h5z" f="#f4f4f4" s="#333" w={1.200} />,
  stPaper: <><P d="M2 1h11v11H2z" f="#f8f8f8" s="#333" /><P d="M5 4v5h5z" s="#222" /><P d="M0 14.500h16" s="#444" w={2} /></>,
  stTile: <><P d="M.5 2h7v8h-7zM8.500 2h7v8h-7z" f="#f8f8f8" s="#333" /><P d="M1 13.500h14" s="#444" w={2} /></>,
  stAnno: <P d="M8 1l2 8 5 5-7-2-7 2 5-5z" f="#f2f2f2" s="#444" w={1.200} />,
  stAnno2: <><P d="M7 1l2 8 4 5-6-2-6 2 4-5z" f="#f2f2f2" s="#444" w={1.200} /><C x={13} y={9} r={2.500} f="#ffd050" s="#e09020" /></>,
  stAnno3: <P d="M9 1l2 8 4 5-6-2-6 2 4-5zM4 0l2 4H1z" f="#c8c8c8" s="#777" w={1.200} />,
  stLock: <><P d="M1 7h9v8H1z" f="#f0f0f0" s="#333" w={1.200} /><P d="M9 7V3c0-3 6-3 6 0v3" s="#333" w={1.500} /><P d="M5.500 9v4" s="#222" w={1.500} /></>,
  stHw: <><C x={8} y={8} r={6.500} f="#8c8c8c" s="#777" /><F d="M5 3l6 7-2 1-5-6z" f="#eee" /></>,
  stMail: <><P d="M1 7l7-5 7 5v8H1z" f="#a8d0f0" s="#3868a0" /><F d="M4 2h8v6H4z" f="#f0c060" /><P d="M1 8l7 4 7-4" s="#fff" w={1.500} /></>,
  stDocs: <><C x={6} y={6} r={4} f="#b8d8f0" s="#4878a8" /><P d="M7 6h7v9H7zM9 9h4M9 12h4" f="#fff" s="#2a5f98" /></>,
  stPy: <><P d="M2 1h8l3 3v7H2z" f="#4a7fc0" s="#24406a" /><F d="M2 11h8v4H2z" f="#f0d040" /><P d="M8 11l2 3 5-6" s="#18a028" w={2} /></>,
  stWin: <><P d="M1 1.500h14v13H1z" f="#fff" s="#333" /><F d="M1.500 2h13v3h-13z" f="#777" /></>,
};

const Svg = styled.svg`
  display: block;
  flex: none;
`;
const Icon = ({ n, w = 16 }) => (
  <Svg width={w} height="16" viewBox={`0 0 ${w} 16`} aria-hidden="true">{icons[n]}</Svg>
);

/* ---------- shared parts ---------- */
const Shell = styled.div`
  position: relative;
  height: 100vh;
  display: flex;
  flex-direction: column;
  overflow: hidden;
  background: #696969;
`;
const Grip = styled.span`
  flex: none;
  ${(p) => (p.$v ? "height: 8px; width: 100%;" : "width: 8px; align-self: stretch;")}
  background: radial-gradient(circle at 1px 1px, #222 1px, transparent 1px) 0 0 / 3px 3px, #5c5c5c;
  border: solid #565656;
  border-width: ${(p) => (p.$v ? "1px 5px" : "4px 1px")};
`;
const Bar = styled.div`
  display: flex;
  height: 24px;
  flex: none;
  border: 1px solid #2f2f2f;
  border-left-width: ${(p) => (p.$first ? 0 : 1)}px;
  background: #ececec;
`;
const ToolBtn = styled.button`
  width: ${(p) => p.$w || 23}px;
  flex: none;
  height: 22px;
  &:hover { background: #d3e6f5; }
`;
const Sep = styled.span`
  flex: none;
  width: 2px;
  margin: 1px 2px;
  border-left: 1px solid #777;
`;
const Row = styled.div`
  display: flex;
  gap: ${(p) => p.$gap || 0}px;
  flex: none;
`;
const Tools = ({ items }) =>
  items.split(" ").map((n, i) => {
    if (n === "|") return <Sep key={i} />;
    const small = n.startsWith("caret");
    return (
      <ToolBtn key={i} type="button" aria-label={n} $w={small ? 12 : 23}>
        <Icon n={n} w={small ? 8 : 16} />
      </ToolBtn>
    );
  });

/* Half-width characters sit on a six pixel pitch beside twelve pixel ideographs. */
const Half = styled.span`
  font-family: "DejaVu Sans Mono", monospace;
  font-size: 10px;
`;
const Mixed = ({ t }) =>
  t.split(/([\x20-\x7e]+)/).map((s, i) => (i % 2 ? <Half key={i}>{s}</Half> : s));

/* ---------- title ---------- */
const Top = styled.header`
  display: grid;
  grid-template: 24px 21px / 41px 1fr;
  flex: none;
`;
const AppButton = styled.button`
  grid-row: 1 / 3;
  height: 41px;
  z-index: 1;
  border: 1px solid #111;
  background: linear-gradient(#c8c8c8, #8c8c8c 60%, #a4a4a4);
  gap: 3px;
`;
const TitleRow = styled.div`
  position: relative;
  display: grid;
  grid-template-columns: 393px 1fr auto;
  background: #fff;
  overflow: hidden;
`;
const Quick = styled.div`
  display: flex;
  align-items: center;
  padding-left: 5px;
  border-right: 1px solid #444;
  background: linear-gradient(#a9a9a9, #868686);
`;
const QuickSelect = styled.label`
  display: flex;
  align-items: center;
  flex: 1;
  height: 22px;
  padding: 0 3px;
  gap: 1px;
  border: 1px solid #777;
  background: linear-gradient(90deg, #d8d8d8, #c4c4c4);
  color: #555;
  select { appearance: none; flex: 1; height: 20px; }
`;
const QuickMore = styled.button`
  width: 16px;
  height: 22px;
  background: #929292;
`;
const Title = styled.h1`
  margin: 0;
  padding-left: 288px;
  font-size: 12px;
  font-weight: 400;
  line-height: 24px;
  white-space: pre;
  display: flex;
  gap: 26px;
`;
const Caption = styled.div`
  display: flex;
  button { width: 46px; height: 24px; }
`;
const Shade = styled.span`
  position: absolute;
  top: -4px;
  right: 272px;
  width: 284px;
  height: 4px;
  box-shadow: 0 0 5px #555;
`;
const MenuBar = styled.nav`
  display: flex;
  align-items: center;
  padding-left: 14px;
  gap: 25px;
  color: #fff;
  border-top: 1px solid #333;
  background: linear-gradient(#959595, #5c5c5c);
  a { white-space: nowrap; }
  > span { display: flex; gap: 14px; }
`;
const DocControls = styled.div`
  display: flex;
  margin-left: auto;
  padding-right: 4px;
  gap: 4px;
  color: #222;
`;

/* ---------- file tabs ---------- */
const FileTabs = styled.div`
  display: flex;
  align-items: flex-end;
  height: 27px;
  flex: none;
  padding: 0 0 1px 20px;
  border-bottom: 1px solid #b4b4b4;
  background: linear-gradient(#a4a4a4, #909090);
`;
const FileTab = styled.button`
  position: relative;
  width: ${(p) => p.$w}px;
  height: 21px;
  padding: 0 12px 0 11px;
  gap: 5px;
  justify-content: flex-start;
  white-space: nowrap;
  color: ${(p) => (p.$on ? "#000" : "#4a4a4a")};
  z-index: ${(p) => (p.$on ? 1 : 0)};
  isolation: isolate;
  &::before, &::after {
    content: "";
    position: absolute;
    z-index: -1;
    inset: 0 50% 0 0;
    border: solid #bdbdbd;
    border-width: 1px 0 0 1px;
    border-top-left-radius: 8px;
    transform: skewX(-20deg);
    background: ${(p) => (p.$on ? "linear-gradient(#d2d2d2, #bdbdbd)" : "linear-gradient(#a0a0a0, #949494)")};
  }
  &::after {
    inset: 0 0 0 50%;
    border-width: 1px 1px 0 0;
    border-radius: 0 8px 0 0;
    transform: skewX(20deg);
  }
  > svg:last-child { margin-left: 4px; }
  > svg:first-child { margin-left: 0; }
`;
const NewTab = styled.button`
  width: 21px;
  height: 16px;
  margin: 0 0 2px 10px;
  border: 1px solid #555;
  border-radius: 2px 8px 2px 8px;
  background: #7c7c7c;
  color: #ccc;
  font-weight: 700;
`;

/* ---------- toolbars ---------- */
const Bars = styled.div`
  display: flex;
  flex-direction: column;
  gap: 3px;
  padding: 4px 0;
  flex: none;
`;
const Drop = styled.label`
  position: relative;
  display: flex;
  align-items: center;
  flex: none;
  width: ${(p) => p.$w}px;
  padding: 0 6px 0 ${(p) => p.$pad || 5}px;
  gap: 5px;
  background: #cbcbcb;
  border: 1px solid #d8d8d8;
  color: #666;
  select {
    appearance: none;
    flex: 1;
    min-width: 0;
    height: 20px;
    opacity: 1;
    ${(p) => p.$mono && css`font-family: "DejaVu Sans Mono", monospace; font-size: 10px;`}
  }
`;
const Chevron = () => (
  <Svg width="8" height="6" viewBox="0 0 8 6"><P d="M.5 1L4 4.500 7.500 1" s="#999" /></Svg>
);
const Swatch = styled.i`
  width: 10px;
  height: 10px;
  flex: none;
  border: 1px solid #111;
  background: #0ff;
`;
const Sample = styled.i`
  width: ${(p) => p.$w}px;
  flex: none;
  border-top: 1px solid #000;
`;
const Select = ({ label, value, before, ...rest }) => (
  <Drop {...rest}>
    {before}
    <select aria-label={label}><option>{value}</option></select>
    <Chevron />
  </Drop>
);

/* ---------- workspace ---------- */
const Work = styled.div`
  display: grid;
  grid-template-columns: 88px 1fr;
  gap: 4px;
  flex: 1;
  min-height: 0;
`;
const Panel = styled.aside`
  display: flex;
  flex-direction: column;
  margin: 2px 0;
  min-height: 0;
  background: #efefef;
  border-radius: 4px 4px 2px 2px;
  border-bottom: 1px solid #bbb;
  overflow: hidden;
`;
const PanelHead = styled.div`
  display: flex;
  gap: 6px;
  height: 22px;
  flex: none;
  padding: 4px 0 0 2px;
  background: #a2a2a2;
  color: #111;
  &::before {
    content: "";
    width: 4px;
    height: 11px;
    background: radial-gradient(circle at 1px 1px, #333 1px, transparent 1px) 0 0 / 2px 2px;
  }
`;
const MenuList = styled.div`
  display: flex;
  flex-direction: column;
  padding: ${(p) => (p.$top ? "7px 0 0" : p.$sub ? "2px 0 1px" : "1px 0")};
  ${(p) => p.$line && "border-top: 2px solid #8a8a8a; border-bottom: 2px solid #fff; background: #efefe9;"}
  hr { width: calc(100% - 3px); height: 2px; margin: 2px 0 2px 3px; border: 0; border-top: 1px solid #888; background: #fff; }
`;
const MenuItem = styled.button`
  display: grid;
  grid-template-columns: 22px 48px;
  align-items: center;
  justify-content: start;
  height: 18px;
  flex: none;
  padding-left: 3px;
  column-gap: 3px;
  text-align: left;
  &:hover { background: #d9e7f4; }
`;
const Word = styled.span`
  display: flex;
  justify-content: space-between;
  white-space: nowrap;
`;
const Item = ({ t, i, open, teal }) => (
  <MenuItem type="button">
    {i ? <Icon n={i} /> : (
      <Svg width="16" height="12" viewBox="0 0 16 12">
        <path d={open ? "M3 4h9l-4.500 5z" : "M5 1v10l5-5z"} fill={teal ? "#0a8080" : "#2a64a0"} />
      </Svg>
    )}
    <Word>{t.length === 2 ? [...t].map((c) => <span key={c}>{c}</span>) : t}</Word>
  </MenuItem>
);
const Right = styled.div`
  display: flex;
  flex-direction: column;
  min-width: 0;
  min-height: 0;
`;
const Upper = styled.div`
  display: flex;
  flex: 1;
  min-height: 0;
  padding-right: 4px;
`;
const DocColumn = styled.main`
  display: flex;
  flex-direction: column;
  flex: 1;
  min-width: 0;
`;
const Document = styled.div`
  display: flex;
  flex-direction: column;
  flex: 1;
  min-height: 0;
  border-right: 2px solid #e8e8e8;
`;
const DocTabs = styled.div`
  display: flex;
  gap: 2px;
  height: 21px;
  flex: none;
  background: #efefef;
  border-bottom: 3px solid #8d8d8d;
`;
const DocTab = styled.button`
  height: 18px;
  padding: 0 7px 0 10px;
  white-space: nowrap;
  border: solid #333;
  border-width: 0 1px 1px 0;
  background: #f3f3f3;
  ${(p) => p.$on && "padding-left: 9px; background: #fde7e7; color: #1515e8; border-left-width: 1px; border-bottom-color: #ddd; border-right-color: #ddd;"}
`;
const Canvas = styled.div`
  position: relative;
  flex: 1;
  min-height: 0;
  margin-left: 2px;
  background: #000;
  overflow: hidden;
  color: #fff;
`;
const Drawing = styled.svg`
  position: absolute;
  inset: 0;
  width: 100%;
  height: 100%;
`;
const ViewLabel = styled.div`
  position: absolute;
  left: 4px;
  top: 5px;
  display: flex;
  line-height: 16px;
`;
const Ucs = styled.div`
  position: absolute;
  left: 12px;
  bottom: 8px;
`;
const Dynamic = styled.label`
  position: absolute;
  left: 866px;
  top: 264px;
  display: flex;
  gap: 5px;
  align-items: flex-start;
  color: #111;
  span { width: 94px; height: 23px; padding: 2px 3px; background: #969696; white-space: pre; }
  input { width: 34px; height: 20px; padding: 0 3px; background: linear-gradient(#0078d7, #0078d7) 3px 1px / 21px 17px no-repeat, #fff; color: #fff; }
`;
const Cube = styled.div`
  position: absolute;
  right: 13px;
  top: 12px;
  width: 138px;
  height: 138px;
  display: grid;
  grid-template: 28px 1fr 26px / 26px 1fr 26px;
  place-items: center;
  font-size: 19px;
  line-height: 26px;
  color: #8c8c8c;
  > svg { position: absolute; inset: 10px; }
  > b { font-weight: 400; z-index: 1; }
  > b:nth-of-type(1) { grid-area: 1 / 2; }
  > b:nth-of-type(2) { grid-area: 2 / 1; }
  > b:nth-of-type(3) { grid-area: 2 / 3; }
  > b:nth-of-type(4) { grid-area: 3 / 2; }
`;
const Face = styled.button`
  grid-area: 2 / 2;
  width: 50px;
  height: 50px;
  z-index: 1;
  border: 9px solid #a3a3a3;
  background: #8f9499;
  color: #4a4d50;
  font: 28px/30px "Noto Sans CJK SC", sans-serif;
  font-weight: 300;
`;
const Wcs = styled.button`
  position: absolute;
  right: 58px;
  top: 167px;
  width: 48px;
  height: 17px;
  gap: 6px;
  border-radius: 4px;
  border: 1px solid #8e8e9a;
  background: #757584;
  color: #b8b8bd;
  font: 11px/14px "Liberation Sans", sans-serif;
`;
const Layouts = styled.div`
  display: flex;
  height: 15px;
  flex: none;
  padding-left: 2px;
  background: #efefef;
  > button[aria-label] { width: 14px; border: solid #aaa; border-width: 0 1px 1px 0; }
`;
const LayoutTab = styled.button`
  position: relative;
  padding: 0 8px;
  margin-left: ${(p) => (p.$on ? 3 : 1)}px;
  line-height: 15px;
  isolation: isolate;
  ${(p) => p.$on && "color: #fff;"}
  &::before, &::after {
    content: "";
    position: absolute;
    z-index: -1;
    inset: 0 0 1px 0;
    ${(p) => (p.$on ? "background: #000;" : "border-bottom: 1px solid #444;")}
    border-right: 1px solid #444;
    transform: skewX(-20deg);
  }
  &::after { ${(p) => (p.$on ? "transform: skewX(20deg); right: 8px;" : "display: none;")} }
`;
const BottomBars = styled.div`
  display: flex;
  gap: 2px;
  padding: 6px 0 8px;
`;
const WordTool = styled.button`
  width: 16px;
  height: 16px;
  margin: 3px 4px 0 3px;
  background: #d6d0c8;
  color: #2a68b0;
  font-size: 14px;
  line-height: 16px;
`;
const Side = styled.div`
  display: flex;
  flex-direction: column;
  margin-left: ${(p) => p.$ml}px;
`;
const SideBar = styled.div`
  display: flex;
  flex-direction: column;
  width: ${(p) => p.$w}px;
  align-items: center;
  border: 1px solid #333;
  background: #ececec;
  hr { width: 19px; height: 2px; margin: 2px 0; border: 0; border-top: 1px solid #999; background: #fff; flex: none; }
  button { width: 21px; height: 22px; flex: none; }
`;
const SideTools = ({ w, items }) => (
  <SideBar $w={w} role="toolbar">
    <Grip $v />
    {items.split(" ").map((n, i) =>
      n === "|" ? <hr key={i} /> : <button key={i} type="button" aria-label={n}><Icon n={n} /></button>
    )}
  </SideBar>
);

/* ---------- command line ---------- */
const Command = styled.section`
  display: grid;
  grid-template: 34px 22px / 23px 1fr;
  flex: none;
  margin-bottom: 1px;
  border-top: 1px solid #777;
  font: 13px/15px "Liberation Mono", "Noto Sans CJK SC", monospace;
  background: #fff;
`;
const CmdSide = styled.div`
  grid-row: 1 / 3;
  display: flex;
  flex-direction: column;
  justify-content: space-between;
  align-items: center;
  padding: 4px 0 8px;
  background: linear-gradient(90deg, #8a8a8a, #5f5f5f);
  > i { width: 17px; height: 5px; background: radial-gradient(circle at 1px 1px, #ccc 1px, transparent 1px) 0 0 / 3px 3px; }
`;
const History = styled.output`
  padding: 1px 3px;
  background: #c9c9c9;
  border-bottom: 1px solid #888;
  white-space: pre;
`;
const Prompt = styled.label`
  display: flex;
  align-items: center;
  padding-left: 5px;
  gap: 5px;
  font-size: 12px;
  white-space: pre;
  input { flex: 1; height: 18px; outline: 0; }
`;
const CmdIcon = styled.span`
  width: 15px;
  height: 15px;
  border: 1px solid #9aa3b0;
  background: #e4e8ee;
  color: #445;
  font-size: 9px;
  line-height: 12px;
`;

/* ---------- status bar ---------- */
const Status = styled.footer`
  display: flex;
  height: 22px;
  flex: none;
  border-top: 1px solid #222;
  background: linear-gradient(#9c9c9c, #7c7c7c);
`;
const StBtn = styled.button`
  width: ${(p) => (p.$w ? `${p.$w}px` : "22px")};
  gap: ${(p) => p.$gap || 4}px;
  flex: none;
  white-space: nowrap;
  border-right: 1px solid #666;
  background: ${(p) => (p.$on ? "linear-gradient(#e4f6fb, #9fcfdf 55%, #b4dde8)" : "linear-gradient(#cfcfcf, #a2a2a2)")};
`;
const Coords = styled.output`
  width: 153px;
  padding-left: 8px;
  font: 10px/24px "DejaVu Sans Mono", monospace;
  background: linear-gradient(#848484, #a0a0a0);
  border-right: 1px solid #555;
`;
const Space = styled.span`
  ${(p) => (p.$w ? `width: ${p.$w}px; flex: none;` : "flex: 1;")}
`;
const Tray = styled.div`
  display: flex;
  align-items: center;
  gap: 4px;
  width: 85px;
  padding-left: 4px;
  border: 2px solid #777;
  background: #b9b9b9;
`;
const Taskbar = styled.div`
  display: flex;
  height: 8px;
  flex: none;
  overflow: hidden;
  padding: 0 75px 0 48px;
  justify-content: space-between;
  background: linear-gradient(90deg, #233f49, #1f3440 60%, #1b2848);
  color: #fff;
  > i { width: 344px; background: #f2f2f2; }
  > time { padding-top: 3px; line-height: 12px; }
`;
const Mark = styled.div`
  position: absolute;
  right: 88px;
  bottom: 34px;
  width: 300px;
  color: rgba(255, 255, 255, 0.72);
  text-shadow: 0 0 2px rgba(120, 120, 120, 0.5);
  pointer-events: none;
`;
const MarkRow = styled.div`
  display: flex;
  align-items: flex-end;
  height: 96px;
  b { font: 700 66px/66px "Liberation Sans", sans-serif; width: 100px; }
  strong { font: 900 52px/64px "Noto Sans CJK SC", sans-serif; white-space: nowrap; }
`;
const MarkUrl = styled.div`
  font: 35px/48px "Noto Sans", sans-serif;
`;

const CaptionIcon = ({ d }) => <Svg width="11" height="11" viewBox="0 0 11 11"><P d={d} s="#888" /></Svg>;
const Lock = () => <Svg width="7" height="10" viewBox="0 0 7 10"><F d="M0 4h7v6H0z" f="#6a6a6a" /><P d="M1.500 4V1.500C1.500 0 5.500 0 5.500 1.500V4" s="#6a6a6a" /></Svg>;

const menus = ["文件(F)", "编辑(E)", "视图(V)", "插入(I)", "格式(O)", "工具(T)", "绘图(D)", "标注(N)", "修改(M)", "参数(P)", "窗口(W)", "帮助(H)"];
const rooms = [["搜索房间", "sRoom"], ["房间轮廓", "sOutline"], ["房间排序", "sSort"], ["查询面积", "sM2a"], ["套内面积", "sM2b"], ["公摊面积", "sM2c"], ["面积计算", "sM2d"], ["面积统计", "sM2e"]];
const roofs = [["搜屋顶线", "sRoofLine"], ["任意坡顶", "sAny"], ["人字坡顶", "sGable"], ["攒尖屋顶", "sPyr"], ["矩形屋顶", "sRect"]];
const rest = ["楼梯其他", "立面", "剖面", "文字表格", "尺寸标注", "符号标注", "图层控制", "工具", "三维建模", "图块图案", "场地布置", "文件布图", "其它", "数据中心", "帮助演示"];
const docs = ["紫荆城一~三期地下室平面2021.01.10", "口部大样", "观澜尊府标准层户型2021.04.25", "JZ5#-8#地下室人防施工图", "RF-01、06~10、13（大样及说明）2020-02-27t8", "JZ5#-8#地下室施工图.dwg"];
const status = [["stInfer"], ["stSnap"], ["stGrid"], ["stOrtho", 1], ["stPolar"], ["stOsnap", 1], ["st3d"], ["stTrack", 1], ["stDucs", 1], ["stDyn", 1], ["stLwt"], ["stTpy", 1], ["stQp"], ["stSc"], ["stAm"]];

export default function App() {
  return (
    <Shell>
      <Global />
      <Top>
        <AppButton type="button" aria-label="应用程序">
          <Svg width="25" height="30" viewBox="0 0 25 30">
            <F d="M12 0l3 0 9 25-5 3-2-6-9 0-3 6-5-4z" f="#c8260f" />
            <F d="M12 0L0 24l5 4 7-20z" f="#e2482c" />
            <F d="M12 8l-4 13 10 2z" f="#7d0f06" />
            <F d="M12 10l-2 8h5z" f="#a8a8a8" />
            <F d="M0 24l8-4 10 1 6 4-5 3-7-3-7 3z" f="#a51608" />
          </Svg>
          <Svg width="7" height="5" viewBox="0 0 7 5"><F d="M0 0h7l-3.500 4z" f="#333c4c" /></Svg>
        </AppButton>
        <TitleRow>
          <Quick>
            {["new", "open", "save", "saveas", "print", "undo"].map((n) => <ToolBtn key={n} type="button" aria-label={n} $w={24}><Icon n={n} /></ToolBtn>)}
            <ToolBtn type="button" aria-label="undo list" $w={12}><Icon n="caret" w={8} /></ToolBtn>
            <ToolBtn type="button" aria-label="redo" $w={24}><Icon n="redoDark" /></ToolBtn>
            <ToolBtn type="button" aria-label="redo list" $w={12}><Icon n="caret" w={8} /></ToolBtn>
            <QuickSelect>
              <Icon n="gear" />
              <select aria-label="工作空间"><option>AutoCAD 经典</option></select>
              <Icon n="caret" w={8} />
            </QuickSelect>
            <QuickMore type="button" aria-label="更多"><Svg width="8" height="8" viewBox="0 0 8 8"><F d="M0 0h8v1.500H0zM0 3h8L4 7z" f="#000" /></Svg></QuickMore>
          </Quick>
          <Title><span>T20天正建筑软件 V3.0 For Autodesk AutoCAD 2014</span><span>观澜尊府标准层户型2021.04.25.dwg</span></Title>
          <Shade />
          <Caption>
            <button type="button" aria-label="最小化"><CaptionIcon d="M.5 6.500h10" /></button>
            <button type="button" aria-label="还原"><CaptionIcon d="M.5 2.500h7v8h-7zM2.500 2.500v-2h8v8h-3" /></button>
            <button type="button" aria-label="关闭"><CaptionIcon d="M.5.5l10 10M10.500.5l-10 10" /></button>
          </Caption>
        </TitleRow>
        <MenuBar>
          {menus.map((m) => <a href="#menu" key={m}>{m}</a>)}
          <span><a href="#menu">源泉设计</a><a href="#menu">协同设计</a><a href="#menu">标准化工具箱</a></span>
          <DocControls>
            <button type="button" aria-label="最小化图纸"><Svg width="11" height="12" viewBox="0 0 11 12"><P d="M0 10h10" s="#222" w={2} /></Svg></button>
            <button type="button" aria-label="还原图纸"><Svg width="14" height="12" viewBox="0 0 14 12"><P d="M1 5h7v6H1zM5 5V1h7v6H8" s="#222" w={1.500} /></Svg></button>
            <button type="button" aria-label="关闭图纸"><Svg width="10" height="12" viewBox="0 0 10 12"><P d="M1 2l8 8M9 2l-8 8" s="#222" w={2.500} /></Svg></button>
          </DocControls>
        </MenuBar>
      </Top>
      <FileTabs>
        <FileTab type="button" $w={262}><Lock /><span>紫荆城一~三期地下室平面2021.01.10*</span></FileTab>
        <FileTab type="button" $w={121}>口部大样*</FileTab>
        <FileTab type="button" $w={216} $on><span>观澜尊府标准层户型2021.04.25*</span><Svg width="8" height="8" viewBox="0 0 8 8"><P d="M1 1l6 6M7 1L1 7" s="#888" w={2} /></Svg></FileTab>
        <FileTab type="button" $w={190}>JZ5#-8#地下室人防施工图*</FileTab>
        <FileTab type="button" $w={262}><Lock /><span>RF-01、06~10、13...）2020-02-27t8*</span></FileTab>
        <FileTab type="button" $w={162}>JZ5#-8#地下室施工图*</FileTab>
        <NewTab type="button" aria-label="新建选项卡">+</NewTab>
      </FileTabs>
      <Bars>
        <Row $gap={2}>
          <Bar $first role="toolbar"><Grip />
            <Tools items="new open save | print preview publish web | cut copy paste match block | undoOff caretOff redoOff caretOff | pan zoomrt zoomwin zoomprev | props center palette sheet markup calc | help" />
          </Bar>
          <Bar role="toolbar"><Grip />
            <Tools items="textStyle" /><Select label="文字样式" value="Standard" $w={120} $pad={18} /><Sep />
            <Tools items="dimStyle" /><Select label="标注样式" value="STANDARD" $w={120} $pad={18} /><Sep />
            <Tools items="tableStyle" /><Select label="表格样式" value="Standard" $w={120} /><Sep />
            <Tools items="leaderStyle" /><Select label="引线样式" value="Standard" $w={120} $pad={18} />
          </Bar>
        </Row>
        <Row $gap={2}>
          <Bar $first role="toolbar"><Grip />
            <Select label="工作空间" value="AutoCAD 经典" $w={175} $pad={9} /><Tools items="gear frozen" />
          </Bar>
          <Bar role="toolbar"><Grip />
            <Tools items="layers" />
            <Select label="图层" value="建筑线" $w={297} before={<><Icon n="bulb" w={12} /><Icon n="sun" w={15} /><Icon n="vpfreeze" w={14} /><Icon n="unlock" w={14} /><Swatch /></>} />
            <Tools items="layerUp layerPrev layerState" />
          </Bar>
          <Bar role="toolbar"><Grip />
            <Select label="颜色" value="ByLayer" $w={150} $mono before={<Swatch />} /><Sep />
            <Select label="线型" value="ByLayer" $w={160} $mono before={<Sample $w={60} />} /><Sep />
            <Select label="线宽" value="ByLayer" $w={125} $mono before={<Sample $w={34} />} /><Sep />
            <Select label="打印样式" value="ByColor" $w={119} $pad={8} $mono />
          </Bar>
        </Row>
        <Row $gap={2}>
          <Bar $first role="toolbar"><Grip />
            <Tools items="hand find | wallWin column | axis section leaderAB dimE arrowA roomE elev ab | table wave arch pavil | redEye edit eye | grid4 door ruler" />
          </Bar>
          <Bar role="toolbar"><Grip />
            <Tools items="ov1 ov2 ov3 ov4 | alL alR alC | alT alB alM | distV distH slope" />
          </Bar>
          <Bar role="toolbar"><Grip />
            <Tools items="struct doc diam redGrid ax2 ax1 pile beam slab swing win m2 m2t pillar gate gate2 roof joint book plan elev dimE arrowA north qmark" />
          </Bar>
        </Row>
      </Bars>
      <Work>
        <Panel>
          <PanelHead>T20...</PanelHead>
          <MenuList $top>
            <Item t="设置" /><Item t="轴网柱子" /><Item t="墙体" /><Item t="门窗" /><Item t="房间屋顶" open />
          </MenuList>
          <MenuList $line $sub>
            {rooms.map(([t, i]) => <Item key={t} t={t} i={i} />)}
            <Item t="房间布置" teal />
            <hr />
            {roofs.map(([t, i]) => <Item key={t} t={t} i={i} />)}
            <hr />
            <Item t="加老虎窗" i="sDormer" /><Item t="加雨水管" i="sPipe" />
          </MenuList>
          <MenuList>{rest.map((t) => <Item key={t} t={t} />)}</MenuList>
        </Panel>
        <Right>
          <Upper>
            <DocColumn>
              <Document>
                <DocTabs>{docs.map((t, i) => <DocTab key={t} type="button" $on={i === 2}><span><Mixed t={t} /></span></DocTab>)}</DocTabs>
                <Canvas>
                  <Drawing>
                    <path d="M532.500 211.500h302v193h-108v114h-80v-114h-114z" fill="none" stroke="#00e5e5" />
                    <path d="M849.500 0v2000M0 246.500h4000" stroke="#fff" fill="none" />
                    <path d="M983 284l17 7-2 2 267 297-274-291-3 3z" fill="#ff3b3b" stroke="#ff3b3b" strokeWidth="0.600" />
                  </Drawing>
                  <ViewLabel><span>[−]</span><span>[俯视]</span><span>[二维线框]</span></ViewLabel>
                  <Dynamic><span>出檐长&lt;600&gt;:</span><input defaultValue="600" /></Dynamic>
                  <Cube>
                    <svg width="118" height="118" viewBox="0 0 118 118"><circle cx="59" cy="59" r="53" fill="none" stroke="#2d2d2d" strokeWidth="12" /></svg>
                    <b>北</b><b>西</b><b>东</b><b>南</b>
                    <Face type="button">上</Face>
                  </Cube>
                  <Wcs type="button">WCS<Svg width="9" height="5" viewBox="0 0 9 5"><P d="M1 .5h7l-3.500 4z" s="#9a9aa4" /></Svg></Wcs>
                  <Ucs>
                    <svg width="76" height="76" viewBox="0 0 76 76" fill="none" stroke="#fff">
                      <path d="M5.500 20v50.500h50.500M1.500 65.500h9v9h-9z" />
                      <path d="M6.500 3l6 6.500v6.500M18.500 3l-6 6.500M60.500 56l12 13M72.500 56l-12 13" />
                    </svg>
                  </Ucs>
                </Canvas>
                <Layouts>
                  {["M3 2v8M10 2v8L5 6z", "M9 2v8L4 6z", "M4 2v8l5-4z", "M10 2v8M3 2v8l5-4z"].map((d, i) => (
                    <button key={i} type="button" aria-label={`nav ${i + 1}`}><Svg width="12" height="12" viewBox="0 0 12 12"><P d={d} f="#777" s="#777" /></Svg></button>
                  ))}
                  <LayoutTab type="button" $on>模型</LayoutTab>
                  <LayoutTab type="button"><span>布局<Half>1</Half></span></LayoutTab>
                  <LayoutTab type="button"><span>布局<Half>2</Half></span></LayoutTab>
                </Layouts>
              </Document>
              <BottomBars>
                <Bar role="toolbar"><Grip /><Tools items="bDoor bTable bCheck bMag bGear bHouse bAa bAa2" /><WordTool type="button">设</WordTool><WordTool type="button">定</WordTool></Bar>
                <Bar role="toolbar"><Grip /><Tools items="bBank bRun bRing bEye bEye2 bNode bPc" /></Bar>
              </BottomBars>
            </DocColumn>
            <Side $ml={5}>
              <SideTools w={23} items="erase copyObj mirror offset array move rotate scale stretch trim extend breakPt breakObj join chamfer fillet blend explode" />
              <SideTools w={23} items="ov1 ov2 ov3 ov4 | abcTop hatchBack" />
            </Side>
            <Side $ml={4}>
              <SideTools w={24} items="wallB pathB textB | layerB rainB rainLB propB | abB asB aiB | lineB dashB tB" />
              <SideTools w={24} items="hErase hKnife hSpark hCard hBrick | hMove hCut hRed hSciss hDown hUp hPoly | bucket | hPen hPen1 hPen | dashE dashK spread" />
            </Side>
          </Upper>
          <Command>
            <CmdSide>
              <i />
              <button type="button" aria-label="关闭命令行"><Svg width="9" height="9" viewBox="0 0 9 9"><P d="M1 1l7 7M8 1L1 8" s="#fff" w={2} /></Svg></button>
              <button type="button" aria-label="自定义"><Svg width="14" height="14" viewBox="0 0 14 14"><P d="M5 5l8 8" s="#eee" w={2.500} /><F d="M1 3l2 2 2-1V2L3 0c3-1 5 2 4 5S2 8 1 3z" f="#eee" /></Svg></button>
            </CmdSide>
            <History>{"选择一封闭的多段线<退出>:\n请输入坡度角 <30>:"}</History>
            <Prompt>
              <CmdIcon>&gt;_</CmdIcon>
              <Svg width="6" height="4" viewBox="0 0 6 4"><F d="M0 0h6L3 4z" f="#888" /></Svg>
              <span><b>TSLOPEROOF</b> 出檐长&lt;600&gt;:</span>
              <input aria-label="命令" />
            </Prompt>
          </Command>
        </Right>
      </Work>
      <Status>
        <Space $w={4} />
        <StBtn type="button" $w={81} $gap={8}><span>比例 <Half>1:100</Half></span><Svg width="8" height="5" viewBox="0 0 8 5"><F d="M0 0h8L4 5z" f="#000" /></Svg></StBtn>
        <Coords>491300, 381573, 0</Coords>
        {status.map(([n, on]) => <StBtn key={n} type="button" aria-label={n} $on={on}><Icon n={n} /></StBtn>)}
        <Space />
        <StBtn type="button" $w={31}>模型</StBtn>
        <StBtn type="button" aria-label="图纸"><Icon n="stPaper" /></StBtn>
        <StBtn type="button" aria-label="布局"><Icon n="stTile" /></StBtn>
        <Space $w={18} />
        <StBtn type="button" $w={54}><Icon n="stAnno" /><Half>1:1</Half><Svg width="8" height="5" viewBox="0 0 8 5"><F d="M0 0h8L4 5z" f="#000" /></Svg></StBtn>
        <StBtn type="button" aria-label="注释可见性"><Icon n="stAnno2" /></StBtn>
        <StBtn type="button" aria-label="自动缩放"><Icon n="stAnno3" /></StBtn>
        <Space $w={6} />
        {["gear", "stLock", "stHw"].map((n) => <StBtn key={n} type="button" aria-label={n}><Icon n={n} /></StBtn>)}
        {["编组", "基线", "填充", "加粗"].map((t) => <StBtn key={t} type="button" $w={30} $on>{t}</StBtn>)}
        <StBtn type="button" $w={54}>动态标注</StBtn>
        <Tray><Icon n="stMail" /><Icon n="stDocs" /><Icon n="stPy" /><Icon n="bulb" w={12} /></Tray>
        <Space $w={6} />
        <StBtn type="button" $w={11} aria-label="状态栏菜单"><Svg width="6" height="5" viewBox="0 0 6 5"><F d="M0 0h6L3 5z" f="#000" /></Svg></StBtn>
        <StBtn type="button" aria-label="全屏显示"><Icon n="stWin" /></StBtn>
        <Space $w={2} />
      </Status>
      <Taskbar><i /><time>18:46</time></Taskbar>
      <Mark>
        <MarkRow>
          <b>Bai</b>
          <Svg width="90" height="98" viewBox="0 0 90 98">
            <g fill="rgba(255,255,255,.72)">
              <ellipse cx="12" cy="39" rx="11" ry="14" />
              <ellipse cx="34" cy="17" rx="11" ry="15" />
              <ellipse cx="60" cy="19" rx="11" ry="14" />
              <ellipse cx="77" cy="45" rx="11" ry="14" />
              <path d="M44 42c12 0 16 12 24 20s16 14 12 26c-4 10-18 9-28 7-7-1-12-1-18 0-10 2-22 2-25-8-3-11 4-18 12-25s12-20 23-20z" />
            </g>
            <text x="16" y="88" fontSize="44" fontWeight="700" fill="#6d6d6d" fontFamily='"Liberation Sans", sans-serif'>du</text>
          </Svg>
          <strong>经验</strong>
        </MarkRow>
        <MarkUrl>jingyan.baidu.com</MarkUrl>
      </Mark>
    </Shell>
  );
}
